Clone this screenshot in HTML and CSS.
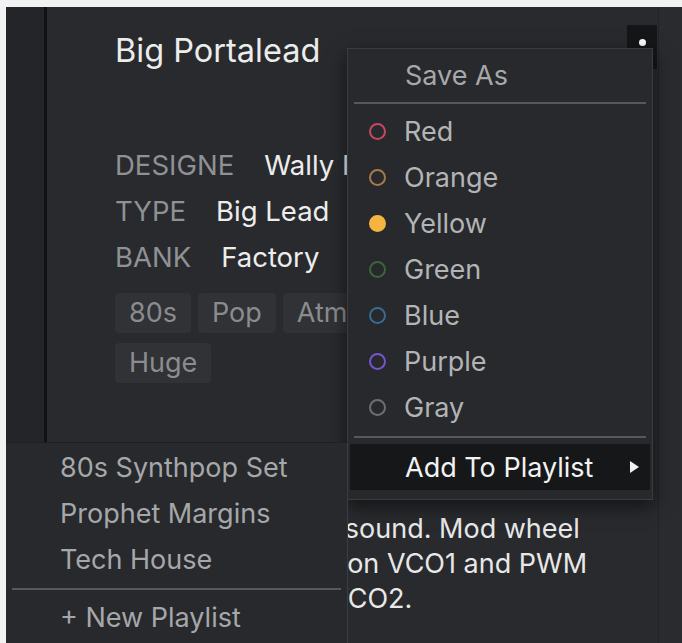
FILE: index.html
```html
<!DOCTYPE html>
<html lang="en">
<head>
    <meta charset="UTF-8" />
    <meta name="viewport" content="width=device-width, initial-scale=1.0" />
    <title>Preset - Big Portalead</title>
    <link rel="stylesheet" href="styles.css">
</head>
<body>
    <div class="app">
        <aside class="sidebar"></aside>

        <main class="preset">
            <header class="preset-head">
                <h1 class="preset-name">Big Portalead</h1>
                <button class="kebab" aria-label="More"><span></span><span></span><span></span></button>
            </header>

            <dl class="meta">
                <div class="meta-row"><dt>DESIGNE</dt><dd>Wally Rivers</dd></div>
                <div class="meta-row"><dt>TYPE</dt><dd>Big Lead</dd></div>
                <div class="meta-row"><dt>BANK</dt><dd>Factory</dd></div>
            </dl>

            <ul class="tags">
                <li>80s</li>
                <li>Pop</li>
                <li>Atmospheric</li>
                <li>Mono</li>
                <li>Huge</li>
            </ul>

            <p class="desc">
                A fat, gliding lead sound. Mod wheel<br>
                adds slow vibrato on VCO1 and PWM<br>
                with a sweep on VCO2.
            </p>
        </main>

        <div class="gutter"></div>

        <!-- context menu opened from the kebab button -->
        <div class="menu ctx-menu">
            <div class="menu-title">Save As</div>
            <hr class="menu-sep">
            <ul class="color-list">
                <li><i class="dot red"></i>Red</li>
                <li><i class="dot orange"></i>Orange</li>
                <li><i class="dot yellow filled"></i>Yellow</li>
                <li><i class="dot green"></i>Green</li>
                <li><i class="dot blue"></i>Blue</li>
                <li><i class="dot purple"></i>Purple</li>
                <li><i class="dot gray"></i>Gray</li>
            </ul>
            <hr class="menu-sep">
            <div class="menu-item active">Add To Playlist <span class="caret"></span></div>
        </div>

        <!-- playlist submenu -->
        <div class="menu playlist-menu">
            <ul class="playlist-list">
                <li>80s Synthpop Set</li>
                <li>Prophet Margins</li>
                <li>Tech House</li>
            </ul>
            <hr class="menu-sep">
            <div class="playlist-new">+ New Playlist</div>
        </div>
    </div>
</body>
</html>
```

FILE: styles.css
```css
* {
    box-sizing: border-box;
}

body {
    margin: 0;
    padding: 7px 0 0 6px;
    height: 643px;
    overflow: hidden;
    background: #f2f2f2;
    font-family: Inter, "Noto Sans", Arial, sans-serif;
}

.app {
    position: relative;
    display: flex;
    height: 636px;
    background: #282a2d;
    overflow: hidden;
}

.sidebar {
    width: 41px;
    background: #242528;
    border-right: 3px solid #111214;
}

.preset {
    flex: 1;
    padding: 18px 1px 0 68px;
}

.preset-head {
    display: flex;
    justify-content: space-between;
    align-items: flex-start;
    height: 46px;
}

.preset-name {
    margin: 8px 0 0;
    font-size: 32.5px;
    line-height: 36px;
    font-weight: 400;
    color: #ececec;
}

.kebab {
    width: 30px;
    height: 44px;
    padding: 14px 0 0;
    border: none;
    background: #151618;
    display: flex;
    flex-direction: column;
    align-items: center;
    gap: 4px;
}

.kebab span {
    flex: none;
    width: 7px;
    height: 7px;
    border-radius: 50%;
    background: #fff;
}

.meta {
    margin: 71px 0 0;
}

.meta-row {
    display: flex;
    gap: 30px;
    font-size: 27.5px;
    line-height: 46px;
}

.meta-row dt {
    color: #8f9194;
}

.meta-row dd {
    margin: 0;
    color: #ededed;
    white-space: nowrap;
}

.tags {
    list-style: none;
    margin: 13px 0 0;
    padding: 0;
    display: flex;
    flex-wrap: wrap;
    gap: 10px 7px;
    max-width: 520px;
}

.tags li {
    padding: 0 14px;
    font-size: 27px;
    line-height: 40px;
    color: #8a8c8f;
    background: #303235;
    border-radius: 4px;
}

.desc {
    margin: 128px 0 0;
    font-size: 27px;
    line-height: 35px;
    color: #e8e8e8;
    white-space: nowrap;
}

.gutter {
    width: 24px;
    background: #2a2b2e;
    border-left: 1px solid #222326;
}

/* menus */

.menu {
    position: absolute;
    background: #27292c;
    font-size: 27px;
    color: #b3b4b6;
}

.menu-sep {
    margin: 0 6px;
    height: 2px;
    border: none;
    background: #56585b;
}

.ctx-menu {
    left: 341px;
    top: 41px;
    width: 306px;
    height: 452px;
    border: 1px solid #3a3c3f;
    box-shadow: 0 6px 18px rgba(0, 0, 0, 0.55);
}

.menu-title {
    height: 53px;
    line-height: 53px;
    padding-left: 57px;
    color: #a7a8aa;
}

.color-list {
    list-style: none;
    margin: 0;
    padding: 4px 0 6px;
}

.color-list li {
    display: flex;
    align-items: center;
    gap: 18px;
    height: 46px;
    padding-left: 21px;
}

.dot {
    width: 17px;
    height: 17px;
    border-radius: 50%;
    border: 2px solid;
}

.dot.red { border-color: #c44860; }
.dot.orange { border-color: #a8784c; }
.dot.yellow { border-color: #f6b440; }
.dot.green { border-color: #3b6638; }
.dot.blue { border-color: #3a6a90; }
.dot.purple { border-color: #7754d0; }
.dot.gray { border-color: #6e6f72; }
.dot.filled { background: #f6b440; }

.menu-item {
    display: flex;
    align-items: center;
    justify-content: space-between;
    height: 46px;
    margin: 6px 2px 0;
    padding: 0 11px 0 55px;
}

.menu-item.active {
    background: #161719;
    color: #f2f2f2;
}

.caret {
    width: 0;
    height: 0;
    border-left: 9px solid #f2f2f2;
    border-top: 6px solid transparent;
    border-bottom: 6px solid transparent;
}

.playlist-menu {
    left: 0;
    top: 435px;
    width: 342px;
    bottom: 0;
    border-right: 1px solid #3a3c3f;
    border-top: 1px solid #1e1f21;
    color: #a6a7a9;
}

.playlist-list {
    list-style: none;
    margin: 0;
    padding: 2px 0 5px;
}

.playlist-list li,
.playlist-new {
    height: 46px;
    line-height: 46px;
    padding-left: 54px;
}

.playlist-new {
    margin-top: 5px;
}
```
